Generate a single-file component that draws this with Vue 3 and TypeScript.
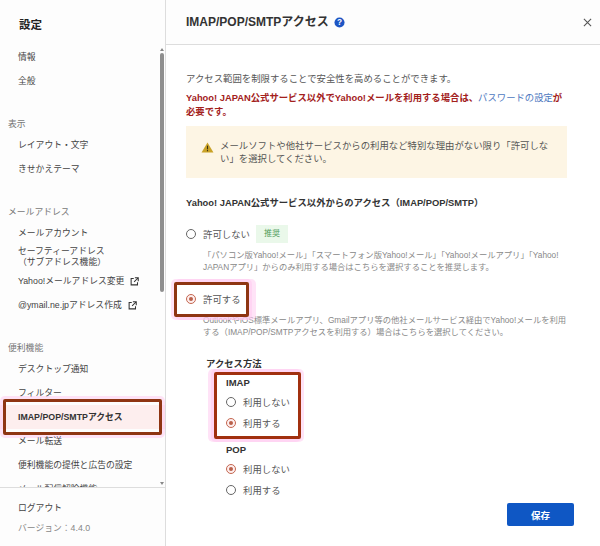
<script setup lang="ts">
type NavItem = { label: string; sub?: string; external?: boolean };
type NavGroup = { title?: string; items: NavItem[] };

const groups: NavGroup[] = [
  { items: [{ label: "情報" }, { label: "全般" }] },
  { title: "表示", items: [{ label: "レイアウト・文字" }, { label: "きせかえテーマ" }] },
  {
    title: "メールアドレス",
    items: [
      { label: "メールアカウント" },
      { label: "セーフティーアドレス", sub: "（サブアドレス機能）" },
      { label: "Yahoo!メールアドレス変更", external: true },
      { label: "@ymail.ne.jpアドレス作成", external: true },
    ],
  },
  {
    title: "便利機能",
    items: [
      { label: "デスクトップ通知" },
      { label: "フィルター" },
      { label: "IMAP/POP/SMTPアクセス" },
      { label: "メール転送" },
      { label: "便利機能の提供と広告の設定" },
      { label: "メール配信解除機能" },
    ],
  },
];

const activeLabel = "IMAP/POP/SMTPアクセス";

const methods = [
  { name: "IMAP", selected: "利用する", boxed: true },
  { name: "POP", selected: "利用しない", boxed: false },
];
const methodOptions = ["利用しない", "利用する"];
</script>

<template>
  <div class="page">
    <aside class="side">
      <h1 class="side-title">設定</h1>
      <div class="side-scroll">
        <nav class="nav">
          <section v-for="(group, i) in groups" :key="i" class="group">
            <h2 v-if="group.title" class="group-title">{{ group.title }}</h2>
            <a
              v-for="item in group.items"
              :key="item.label"
              class="nav-item"
              :class="{ active: item.label === activeLabel }"
            >
              <span class="nav-label">
                {{ item.label }}
                <svg v-if="item.external" class="ext" viewBox="0 0 12 12" width="9" height="9">
                  <path d="M5 2H1.500v8.500H10V7" fill="none" stroke="#333" stroke-width="1.400" />
                  <path d="M6.500 1h4.500v4.500M11 1L5.500 6.500" fill="none" stroke="#333" stroke-width="1.400" />
                </svg>
              </span>
              <span v-if="item.sub" class="nav-sub">{{ item.sub }}</span>
              <span v-if="item.label === activeLabel" class="mark mark-nav"></span>
            </a>
          </section>
        </nav>
        <div class="scrollbar">
          <span class="arrow up"></span>
          <span class="thumb"></span>
          <span class="arrow down"></span>
        </div>
      </div>
      <footer class="side-foot">
        <a class="logout">ログアウト</a>
        <span class="version">バージョン：4.4.0</span>
      </footer>
    </aside>

    <main class="main">
      <header class="head">
        <h1 class="head-title">IMAP/POP/SMTPアクセス</h1>
        <svg class="help" viewBox="0 0 12 12" width="11" height="11">
          <circle cx="6" cy="6" r="5.500" fill="#1d55c4" />
          <text x="6" y="8.800" text-anchor="middle" class="help-mark">?</text>
        </svg>
        <svg class="close" viewBox="0 0 10 10" width="9" height="9">
          <path d="M1 1l8 8M9 1L1 9" stroke="#555" stroke-width="1.200" fill="none" />
        </svg>
      </header>

      <div class="body">
        <p class="lead">アクセス範囲を制限することで安全性を高めることができます。</p>
        <p class="warn">
          Yahoo! JAPAN公式サービス以外でYahoo!メールを利用する場合は、<a class="link">パスワードの設定</a>が必要です。
        </p>

        <div class="notice">
          <svg viewBox="0 0 14 12" width="13" height="11" class="notice-icon">
            <path d="M7 .5L13.500 11.500H.5z" fill="#c9a227" />
            <rect x="6.400" y="4" width="1.200" height="4" fill="#3a2f10" />
            <rect x="6.400" y="8.800" width="1.200" height="1.300" fill="#3a2f10" />
          </svg>
          <p>メールソフトや他社サービスからの利用など特別な理由がない限り「許可しない」を選択してください。</p>
        </div>

        <h2 class="section-title">Yahoo! JAPAN公式サービス以外からのアクセス（IMAP/POP/SMTP）</h2>

        <div class="choice first">
          <span class="radio"></span>
          <span class="choice-label">許可しない</span>
          <span class="badge">推奨</span>
        </div>
        <p class="choice-note">「パソコン版Yahoo!メール」「スマートフォン版Yahoo!メール」「Yahoo!メールアプリ」「Yahoo! JAPANアプリ」からのみ利用する場合はこちらを選択することを推奨します。</p>

        <div class="choice second">
          <span class="radio on"></span>
          <span class="choice-label">許可する</span>
          <span class="mark mark-allow"></span>
        </div>
        <p class="choice-note">OutlookやiOS標準メールアプリ、Gmailアプリ等の他社メールサービス経由でYahoo!メールを利用する（IMAP/POP/SMTPアクセスを利用する）場合はこちらを選択してください。</p>

        <h3 class="method-title">アクセス方法</h3>
        <div class="methods">
          <div v-for="m in methods" :key="m.name" class="method">
            <h4 class="method-name">{{ m.name }}</h4>
            <label v-for="opt in methodOptions" :key="opt" class="method-opt">
              <span class="radio" :class="{ on: m.selected === opt }"></span>
              <span class="method-label">{{ opt }}</span>
            </label>
            <span v-if="m.boxed" class="mark mark-imap"></span>
          </div>
        </div>
      </div>

      <button class="save" type="button">保存</button>
    </main>
  </div>
</template>

<style>
html,
body {
  margin: 0;
  overflow: hidden;
}
</style>

<style scoped>
.page {
  display: flex;
  width: 600px;
  height: 546px;
  overflow: hidden;
  background: #fff;
  color: #333;
  font-family: "Liberation Sans", "Noto Sans CJK JP", sans-serif;
  font-size: 9.400px;
}

h1, h2, h3, h4, p {
  margin: 0;
}

.side {
  display: flex;
  flex-direction: column;
  flex: none;
  width: 166px;
  height: 546px;
  box-sizing: border-box;
  border-right: 1px solid #ddd;
  background: #fdfdfd;
}

.side-title {
  flex: none;
  height: 45px;
  padding: 17px 0 0 19px;
  box-sizing: border-box;
  font-size: 11.500px;
  line-height: 17px;
  color: #222;
}

.side-scroll {
  position: relative;
  flex: 1;
  min-height: 0;
  overflow: hidden;
}

.group {
  margin-bottom: 22px;
}

.group-title {
  height: 18px;
  padding-left: 8px;
  font-size: 8.800px;
  font-weight: 400;
  line-height: 18px;
  color: #777;
}

.nav-item {
  position: relative;
  display: flex;
  flex-direction: column;
  justify-content: center;
  height: 24px;
  padding-left: 18px;
  font-size: 8.800px;
  line-height: 11px;
  color: #444;
}

.nav-label {
  display: flex;
  align-items: center;
  gap: 6px;
}

.nav-item.active {
  background: #fdeeee;
  font-weight: 700;
  color: #333;
}

.scrollbar {
  position: absolute;
  top: 3px;
  right: 1px;
  bottom: 0;
  display: flex;
  flex-direction: column;
  align-items: center;
  width: 5px;
}

.thumb {
  width: 4px;
  height: 239px;
  margin-top: 2px;
  border-radius: 2px;
  background: #8f8f8f;
}

.arrow {
  width: 0;
  height: 0;
  border-left: 2px solid transparent;
  border-right: 2px solid transparent;
}

.arrow.up {
  border-bottom: 3px solid #888;
}

.arrow.down {
  margin-top: auto;
  margin-bottom: 2px;
  border-top: 3px solid #888;
}

.side-foot {
  display: flex;
  flex-direction: column;
  flex: none;
  gap: 9px;
  height: 59px;
  padding: 15px 0 0 18px;
  box-sizing: border-box;
  border-top: 1px solid #ddd;
  font-size: 8.800px;
  line-height: 11px;
}

.logout {
  color: #444;
}

.version {
  color: #888;
}

.main {
  position: relative;
  display: flex;
  flex-direction: column;
  flex: 1;
  min-width: 0;
}

.head {
  display: flex;
  align-items: center;
  flex: none;
  gap: 5px;
  height: 45px;
  padding: 0 8px 0 20px;
  box-sizing: border-box;
  border-bottom: 1px solid #ddd;
  background: #fdfdfd;
}

.head-title {
  font-size: 12px;
  line-height: 18px;
  color: #333;
}

.help-mark {
  fill: #fff;
  font-size: 9px;
  font-weight: 700;
}

.close {
  margin-left: auto;
}

.body {
  padding: 27px 33px 0 20px;
}

.lead {
  line-height: 14px;
  color: #555;
}

.warn {
  margin-top: 5px;
  font-size: 9.350px;
  font-weight: 700;
  line-height: 14px;
  color: #a3211c;
}

.link {
  color: #4d78c0;
  font-weight: 400;
}

.notice {
  display: flex;
  align-items: flex-start;
  gap: 6px;
  height: 52px;
  margin-top: 7px;
  padding: 13px 14px 0 15px;
  box-sizing: border-box;
  background: #fdf5e4;
  line-height: 13px;
  color: #555;
}

.notice-icon {
  flex: none;
  margin-top: 3px;
}

.section-title {
  margin-top: 18px;
  font-size: 9.350px;
  line-height: 14px;
  color: #333;
}

.choice {
  position: relative;
  display: flex;
  align-items: center;
  gap: 7px;
  height: 16px;
  color: #555;
}

.choice.first {
  margin-top: 16px;
}

.choice.second {
  margin-top: 18px;
}

.radio {
  flex: none;
  position: relative;
  width: 10px;
  height: 10px;
  box-sizing: border-box;
  border: 1px solid #666;
  border-radius: 50%;
  background: #fff;
}

.radio.on {
  border-color: #c4664f;
  background: #fdeeee;
}

.radio.on::after {
  content: "";
  position: absolute;
  top: 2px;
  left: 2px;
  width: 4px;
  height: 4px;
  border-radius: 50%;
  background: #b9604a;
}

.badge {
  margin-left: -1px;
  width: 32px;
  background: #eaf8ea;
  color: #4f9a58;
  font-size: 8px;
  line-height: 18px;
  text-align: center;
}

.choice-note {
  margin-top: 7px;
  padding-left: 17px;
  font-size: 8.300px;
  line-height: 12px;
  color: #888;
}

.method-title {
  margin-top: 19px;
  padding-left: 20px;
  font-size: 9.350px;
  line-height: 14px;
  color: #333;
}

.methods {
  display: flex;
  flex-direction: column;
  gap: 10px;
  margin-top: 5px;
  padding-left: 40px;
}

.method {
  position: relative;
}

.method-name {
  margin-bottom: 1px;
  font-size: 9.500px;
  line-height: 14px;
  color: #333;
}

.method-opt {
  display: flex;
  align-items: center;
  gap: 7px;
  height: 21px;
  color: #555;
}

.mark {
  position: absolute;
  box-sizing: border-box;
  border: 3px solid #8e3512;
  border-radius: 2px;
}

.mark-nav {
  top: -6px;
  bottom: -6px;
  left: 3px;
  right: 3px;
  box-shadow: 0 0 0 3px rgba(255, 200, 240, 0.5);
}

.mark-allow {
  top: -9px;
  left: -12px;
  width: 75px;
  height: 35px;
  box-shadow: 0 0 0 3px rgba(255, 200, 240, 0.5), 4px 0 0 3px rgba(255, 200, 240, 0.5);
}

.mark-imap {
  top: -4px;
  left: -12px;
  width: 87px;
  height: 67px;
  border-color: #a1300f;
  box-shadow: 0 0 0 3px rgba(255, 200, 240, 0.5), -3px 0 0 3px rgba(255, 200, 240, 0.5);
}

.save {
  position: absolute;
  right: 26px;
  bottom: 20px;
  width: 67px;
  height: 23px;
  border: 0;
  border-radius: 2px;
  background: #0f57c4;
  color: #fff;
  font: 700 9.500px "Liberation Sans", "Noto Sans CJK JP", sans-serif;
}
</style>
